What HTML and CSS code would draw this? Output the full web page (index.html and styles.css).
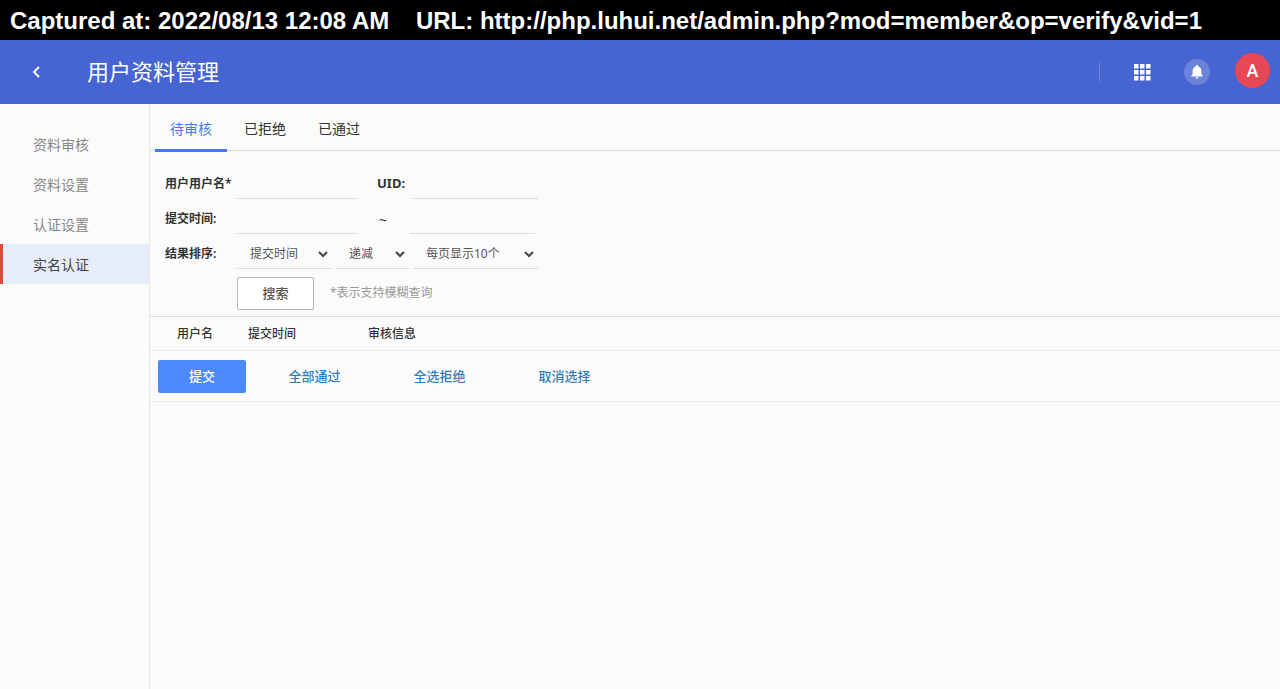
FILE: index.html
```html
<!DOCTYPE html>
<html lang="zh-CN">
<head>
<meta charset="utf-8">
<title>用户资料管理</title>
<link rel="stylesheet" href="styles.css">
</head>
<body>
<div class="capture">Captured at: 2022/08/13 12:08 AM    URL: http://php.luhui.net/admin.php?mod=member&amp;op=verify&amp;vid=1</div>
<header class="topbar">
  <a class="back" href="#" aria-label="返回"><svg width="10" height="14" viewBox="0 0 10 14"><path d="M8 2 3 7l5 5" fill="none" stroke="#fff" stroke-width="2"/></svg></a>
  <h1 class="title">用户资料管理</h1>
  <div class="tools">
    <button class="apps" type="button" aria-label="应用"><svg width="17" height="17" viewBox="0 0 17 17" fill="#fff"><path d="M0 0h4.500v4.500H0zM6 0h4.500v4.500H6zM12 0h4.500v4.500H12zM0 6h4.500v4.500H0zM6 6h4.500v4.500H6zM12 6h4.500v4.500H12zM0 12h4.500v4.500H0zM6 12h4.500v4.500H6zM12 12h4.500v4.500H12z"/></svg></button>
    <button class="bell" type="button" aria-label="通知"><svg width="16" height="16" viewBox="0 0 16 16" fill="#fff"><path d="M8 1c-.8 0-1.300.5-1.300 1.200v.4C4.700 3.200 3.600 4.900 3.600 7v3.300L2.300 11.800v.8h11.400v-.8l-1.300-1.500V7c0-2.100-1.100-3.800-3.100-4.400v-.4C9.300 1.500 8.800 1 8 1zM6.600 13.300a1.400 1.500 0 0 0 2.800 0z"/></svg></button>
    <button class="avatar" type="button">A</button>
  </div>
</header>
<div class="layout">
  <nav class="sidebar">
    <a class="side-link" href="#">资料审核</a>
    <a class="side-link" href="#">资料设置</a>
    <a class="side-link" href="#">认证设置</a>
    <a class="side-link current" href="#">实名认证</a>
  </nav>
  <main class="content">
    <nav class="tabs">
      <a class="tab active" href="#">待审核</a>
      <a class="tab" href="#">已拒绝</a>
      <a class="tab" href="#">已通过</a>
    </nav>
    <form class="filters">
      <div class="row">
        <label class="name" for="username">用户用户名*</label>
        <input class="field" id="username" type="text">
        <label class="uid" for="uid">UID:</label>
        <input class="field wide" id="uid" type="text">
      </div>
      <div class="row">
        <label class="name" for="from">提交时间:</label>
        <input class="field" id="from" type="text">
        <span class="tilde">~</span>
        <input class="field wide" id="to" type="text" aria-label="结束时间">
      </div>
      <div class="row">
        <label class="name" for="order">结果排序:</label>
        <div class="selects">
          <select class="pick medium" id="order"><option>提交时间</option></select>
          <select class="pick small" aria-label="排序方向"><option>递减</option></select>
          <select class="pick large" aria-label="每页数量"><option>每页显示10个</option></select>
        </div>
      </div>
      <div class="row submit-row">
        <button class="search" type="button">搜索</button>
        <span class="hint">*表示支持模糊查询</span>
      </div>
    </form>
    <table class="results">
      <thead><tr><th class="col-user">用户名</th><th class="col-time">提交时间</th><th>审核信息</th></tr></thead>
    </table>
    <div class="actions">
      <button class="primary" type="button">提交</button>
      <a class="action" href="#">全部通过</a>
      <a class="action" href="#">全选拒绝</a>
      <a class="action" href="#">取消选择</a>
    </div>
  </main>
</div>
</body>
</html>
```
FILE: styles.css
```css
* { box-sizing: border-box; }
body {
  margin: 0;
  min-height: 100vh;
  display: flex;
  flex-direction: column;
  background: #fbfbfb;
  color: #333;
  font: 12px/20px "Noto Sans", "Noto Sans CJK SC", sans-serif;
}
a { text-decoration: none; }
button, input, select { font: inherit; margin: 0; padding: 0; border: 0; border-radius: 0; background: none; }
.capture {
  height: 40px;
  padding-left: 10px;
  background: #000;
  color: #fff;
  font: bold 24px/42px "Liberation Sans", sans-serif;
  white-space: pre;
}
.topbar {
  display: flex;
  align-items: center;
  height: 64px;
  padding-right: 10px;
  background: #4664d2;
  color: #fff;
}
.back { display: flex; justify-content: center; width: 72px; }
.title { margin: 0 0 0 15px; padding-bottom: 2px; font-size: 22px; line-height: 32px; font-weight: 400; }
.tools { display: flex; align-items: center; margin-left: auto; }
.apps {
  display: flex;
  align-items: center;
  height: 22px;
  margin-right: 33px;
  padding-left: 34px;
  border-left: 1px solid #6b84dc;
}
.bell {
  display: flex;
  align-items: center;
  justify-content: center;
  width: 26px;
  height: 26px;
  margin-right: 25px;
  border-radius: 50%;
  background: #6b83db;
}
.avatar {
  width: 35px;
  height: 35px;
  margin-bottom: 3px;
  border-radius: 50%;
  background: #e84855;
  color: #fff;
  font: 500 18px/35px Roboto, sans-serif;
}
.layout { display: flex; flex: 1; }
.sidebar { width: 150px; padding-top: 20px; border-right: 1px solid #e5e5e5; }
.side-link {
  display: block;
  padding: 1px 0 0 30px;
  border-left: 3px solid transparent;
  color: #888;
  font-size: 14px;
  line-height: 39px;
}
.side-link.current { background: #e6ecf8; border-left-color: #dc4a3d; color: #444; }
.content { flex: 1; }
.tabs { display: flex; gap: 2px; height: 47px; padding-left: 5px; border-bottom: 1px solid #ddd; }
.tab { height: 48px; padding: 0 15px; color: #333; font-size: 14px; line-height: 50px; }
.tab.active { color: #3f7af0; border-bottom: 3px solid #3f7af0; }
.filters { padding: 13px 0 0 15px; border-bottom: 1px solid #ddd; }
.row { display: flex; height: 35px; line-height: 40px; }
.name { width: 72px; font-weight: 600; }
.field { width: 120px; border-bottom: 1px solid #ddd; }
.wide { width: 125px; }
.uid { width: 56px; padding-left: 20px; font-size: 13px; line-height: 38px; font-weight: 700; }
.tilde { width: 53px; padding-left: 22px; font-size: 14px; line-height: 42px; }
.selects { display: flex; gap: 4px; }
.pick {
  appearance: none;
  padding: 5px 0 0 13px;
  border-bottom: 1px solid #ddd;
  background: url("data:image/svg+xml,%3Csvg xmlns='http://www.w3.org/2000/svg' width='10' height='7'%3E%3Cpath d='M1 1l4 4 4-4' fill='none' stroke='%23444' stroke-width='2'/%3E%3C/svg%3E") no-repeat right 4px top 17px;
  color: #555;
  line-height: 20px;
}
.medium { width: 95px; }
.small { width: 73px; }
.large { width: 125px; }
.submit-row { align-items: center; height: 47px; padding: 1px 0 0 72px; line-height: 20px; }
.search {
  width: 77px;
  height: 33px;
  border: 1px solid #b5b5b5;
  border-radius: 2px;
  background: #fff;
  color: #555;
  font-size: 13px;
  line-height: 30px;
  font-weight: 500;
}
.hint { margin-left: 16px; color: #999; }
.results { width: 100%; border-collapse: separate; border-spacing: 0; table-layout: fixed; }
.results th { height: 34px; padding: 0; border-bottom: 1px solid #eee; text-align: left; font-weight: 500; }
.results .col-user { width: 98px; padding-left: 27px; }
.results .col-time { width: 120px; }
.actions {
  display: flex;
  align-items: center;
  height: 51px;
  padding-left: 8px;
  border-bottom: 1px solid #eee;
  font-size: 13px;
  font-weight: 500;
}
.primary { width: 88px; height: 33px; margin-right: 6px; border-radius: 2px; background: #4c89fb; color: #fff; }
.action { width: 125px; text-align: center; color: #337ab7; }
```
